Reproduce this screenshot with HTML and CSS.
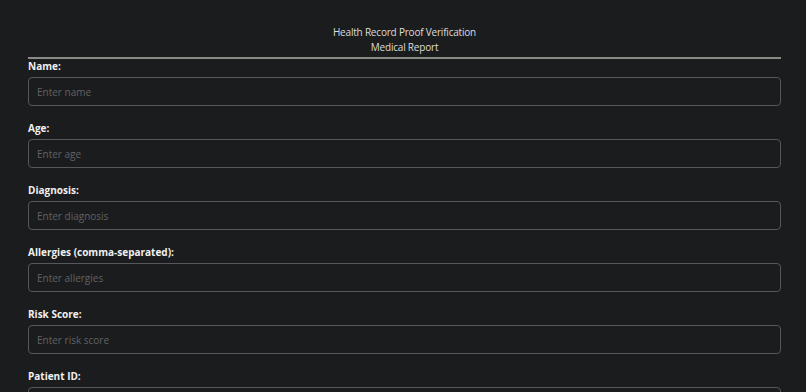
FILE: index.html
```html
<!DOCTYPE html>
<html lang="en">
<head>
  <meta charset="UTF-8">
  <meta name="viewport" content="width=device-width, initial-scale=1.0">
  <title>Health Record Proof Verification</title>
  <link rel="stylesheet" href="styles.css">
</head>
<body>
  <div class="container">
    <div class="header">
      <div class="title">Health Record Proof Verification</div>
      <div class="title">Medical Report</div>
    </div>

    <form class="report-form">
      <div class="field">
        <label for="name">Name:</label>
        <input type="text" id="name" placeholder="Enter name">
      </div>

      <div class="field">
        <label for="age">Age:</label>
        <input type="text" id="age" placeholder="Enter age">
      </div>

      <div class="field">
        <label for="diagnosis">Diagnosis:</label>
        <input type="text" id="diagnosis" placeholder="Enter diagnosis">
      </div>

      <div class="field">
        <label for="allergies">Allergies (comma-separated):</label>
        <input type="text" id="allergies" placeholder="Enter allergies">
      </div>

      <div class="field">
        <label for="risk">Risk Score:</label>
        <input type="text" id="risk" placeholder="Enter risk score">
      </div>

      <div class="field">
        <label for="patient">Patient ID:</label>
        <input type="text" id="patient" placeholder="Enter patient ID">
      </div>
    </form>
  </div>
</body>
</html>
```

FILE: styles.css
```css
body {
  margin: 0;
  padding: 0;
  font-family: "Open Sans", sans-serif;
  background-color: #1b1c1e;
  color: #e4e4e4;
  overflow: hidden;
}

.container {
  padding: 0 25px 0 28px;
}

.header {
  padding-top: 25px;
  padding-bottom: 2px;
  border-bottom: 2px solid #8a8a86;
  text-align: center;
}

.title {
  font-size: 10px;
  line-height: 15px;
  letter-spacing: -0.2px;
  color: #dcdcdc;
}

.report-form {
  margin-top: 1px;
}

.field {
  margin-bottom: 16px;
}

label {
  display: block;
  font-size: 10px;
  line-height: 12px;
  font-weight: 700;
  color: #f0f0f0;
  margin-bottom: 5px;
}

input {
  display: block;
  width: 100%;
  height: 29px;
  box-sizing: border-box;
  padding: 0 8px;
  font-family: "Open Sans", sans-serif;
  font-size: 10px;
  background-color: #1b1c1e;
  color: #ddd;
  border: 1px solid #56575a;
  border-radius: 4px;
  outline: none;
}

input::placeholder {
  color: #616265;
}
```
